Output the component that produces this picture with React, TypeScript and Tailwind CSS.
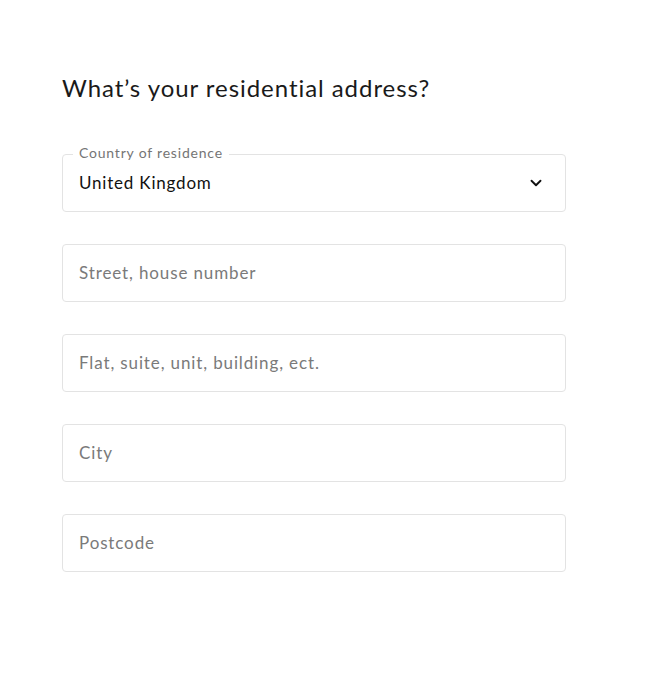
import { ChevronDown } from "lucide-react";

const fields = [
  "Street, house number",
  "Flat, suite, unit, building, ect.",
  "City",
  "Postcode",
];

export default function App() {
  return (
    <div className="min-h-[683px] bg-white pl-[62px] pt-[73px] font-['Lato',sans-serif]">
      <h1 className="text-[24px] leading-[30px] tracking-[0.95px] text-[#1a1a1a]">
        What’s your residential address?
      </h1>
      <div className="mt-[51px] flex w-[504px] flex-col gap-[32px]">
        <div className="relative flex h-[58px] items-center justify-between rounded-[4px] border border-[#e3e3e3] pl-4 pr-[20px]">
          <span className="absolute -top-[10px] left-[10px] bg-white px-[6px] text-[14px] leading-[16px] tracking-[0.8px] text-[#757575]">
            Country of residence
          </span>
          <span className="text-[17px] tracking-[0.8px] text-[#111]">United Kingdom</span>
          <ChevronDown className="h-[18px] w-[18px] text-[#111]" strokeWidth={2.5} />
        </div>
        {fields.map((f) => (
          <div
            key={f}
            className="flex h-[58px] items-center rounded-[4px] border border-[#e3e3e3] pl-4 text-[17px] tracking-[0.87px] text-[#7a7a7a]"
          >
            {f}
          </div>
        ))}
      </div>
    </div>
  );
}
